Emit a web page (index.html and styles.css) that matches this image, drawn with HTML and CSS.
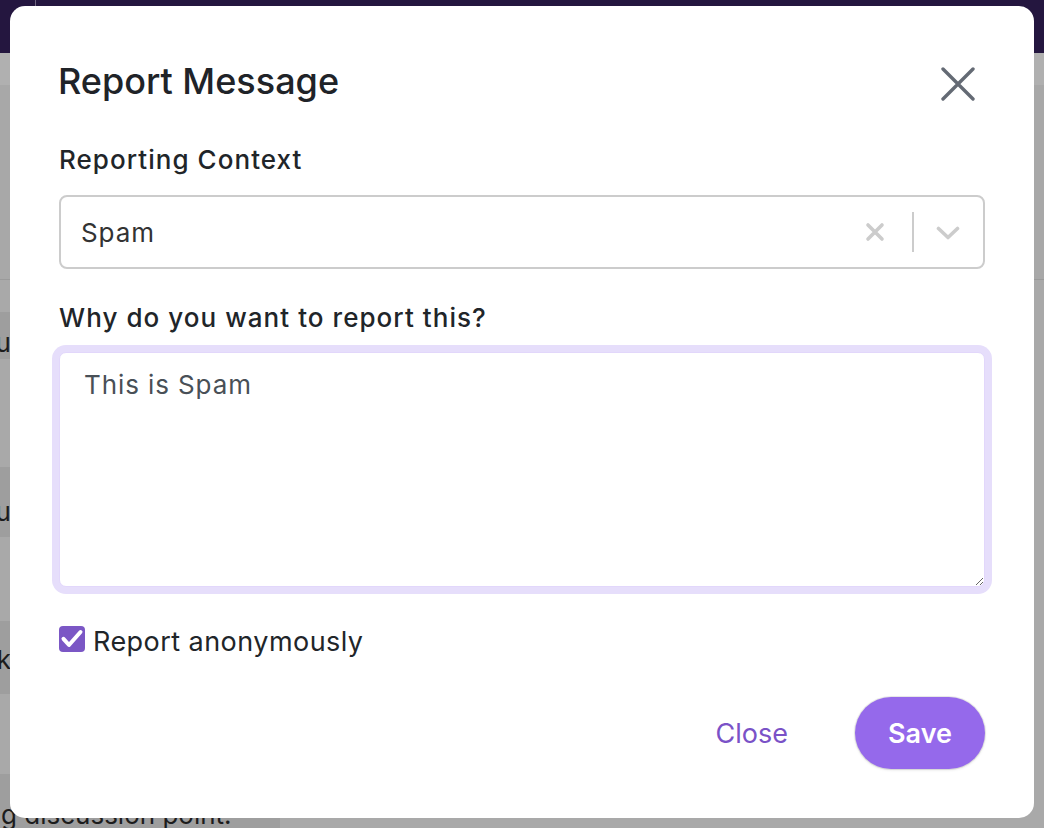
FILE: index.html
```html
<!DOCTYPE html>
<html lang="en">
<head>
<meta charset="utf-8">
<title>Report Message</title>
<link rel="stylesheet" href="styles.css">
</head>
<body>
<div class="page">
  <div class="topbar"><div class="topbar-divider"></div></div>
  <div class="subbar"></div>
  <div class="channel-head"></div>
  <div class="feed">
    <div class="msg msg-1"><div class="msg-clip"><span>Thank you</span></div></div>
    <div class="msg msg-2"><div class="msg-clip"><span>See you</span></div></div>
    <div class="msg msg-3"><div class="msg-clip"><span>Thanks, ok</span></div></div>
    <div class="msg msg-4"><span class="msg-text">g discussion point.</span></div>
  </div>
</div>

<div class="modal" role="dialog" aria-labelledby="modal-title">
  <div class="modal-header">
    <h2 class="modal-title" id="modal-title">Report Message</h2>
    <button class="icon-close" type="button" aria-label="Close">
      <svg width="34" height="34" viewBox="0 0 34 34"><path d="M2 2 L32 32 M32 2 L2 32" stroke="#646a74" stroke-width="3.4" stroke-linecap="round" fill="none"/></svg>
    </button>
  </div>

  <div class="field-label label-context">Reporting Context</div>
  <div class="select">
    <div class="select-value">Spam</div>
    <div class="select-indicators">
      <span class="select-clear">
        <svg width="20" height="20" viewBox="0 0 20 20"><path d="M3 3 L17 17 M17 3 L3 17" stroke="#cccccc" stroke-width="3.6" stroke-linecap="round" fill="none"/></svg>
      </span>
      <span class="select-sep"></span>
      <span class="select-chevron">
        <svg width="24" height="15" viewBox="0 0 24 15"><path d="M2.5 2.5 L12 11.5 L21.5 2.5" stroke="#cccccc" stroke-width="3.6" stroke-linecap="round" stroke-linejoin="round" fill="none"/></svg>
      </span>
    </div>
  </div>

  <label class="field-label label-why" for="reason">Why do you want to report this?</label>
  <textarea class="reason" id="reason">This is Spam</textarea>

  <label class="check-row">
    <span class="checkbox">
      <svg width="26" height="26" viewBox="0 0 26 26"><path d="M4.5 12.8 L10 19 L21.5 6" stroke="#ffffff" stroke-width="4" stroke-linecap="round" stroke-linejoin="round" fill="none"/></svg>
    </span>
    <span class="check-label">Report anonymously</span>
  </label>

  <div class="modal-footer">
    <button class="btn-link" type="button">Close</button>
    <button class="btn-save" type="button">Save</button>
  </div>
</div>
</body>
</html>
```

FILE: styles.css
```css
* { box-sizing: border-box; }

html, body {
  margin: 0;
  padding: 0;
  width: 1044px;
  height: 828px;
  overflow: hidden;
  background: #a9a9a9;
  font-family: Inter, "Noto Sans", "Liberation Sans", sans-serif;
}

/* ---------- dimmed page behind the dialog ---------- */
.page {
  display: flex;
  flex-direction: column;
  height: 828px;
  overflow: hidden;
}
.page > * { flex-shrink: 0; }
.topbar {
  height: 53px;
  background: #24163f;
  padding-left: 35px;
}
.topbar-divider {
  width: 1px;
  height: 53px;
  background: #6f6680;
}
.subbar {
  height: 32px;
  background: #b0b0b0;
}
.channel-head {
  height: 195px;
  background: #a8a8a8;
  border-bottom: 1px solid #9a9a9a;
}
.feed {
  display: flex;
  flex-direction: column;
}
.feed > * { flex-shrink: 0; }
.msg {
  width: 280px;
  background: #9e9e9e;
  display: flex;
  align-items: flex-start;
  font-size: 26px;
  line-height: 30px;
  color: #1c1c1c;
}
.msg-clip {
  width: 11px;
  display: flex;
  justify-content: flex-end;
  white-space: nowrap;
}
.msg-1 { margin-top: 32px; height: 47px; padding-top: 16px; }
.msg-2 { margin-top: 108px; height: 70px; padding-top: 30px; }
.msg-3 { margin-top: 84px; height: 73px; padding-top: 24px; }
.msg-4 { margin-top: 80px; height: 60px; padding: 26px 0 0 1px; }
.msg-4 .msg-text { white-space: nowrap; }

/* ---------- dialog ---------- */
.modal {
  position: fixed;
  top: 6px;
  left: 10px;
  width: 1024px;
  height: 812px;
  background: #ffffff;
  border-radius: 15px;
  padding: 53px 49px 49px 49px;
  display: flex;
  flex-direction: column;
  color: #212529;
}

.modal-header {
  display: flex;
  align-items: center;
  justify-content: space-between;
  height: 44px;
}
.modal-title {
  margin: 0 0 0 -1px;
  font-size: 36px;
  line-height: 44px;
  font-weight: 500;
  color: #202328;
}
.icon-close {
  border: 0;
  background: none;
  padding: 0;
  margin: 5px 10px 0 0;
  width: 34px;
  height: 34px;
  display: block;
}
.icon-close svg { display: block; }

.field-label {
  display: block;
  font-size: 26px;
  line-height: 32px;
  font-weight: 500;
  letter-spacing: 1.05px;
  color: #212529;
}
.label-context { margin-top: 41px; }
.label-why { margin-top: 33px; }

.select {
  margin-top: 19px;
  height: 74px;
  border: 2px solid #cccccc;
  border-radius: 8px;
  display: flex;
  align-items: center;
}
.select-value {
  flex: 1;
  padding-left: 20px;
  font-size: 26px;
  letter-spacing: 0.9px;
  color: #333333;
}
.select-indicators {
  display: flex;
  align-items: center;
  height: 100%;
}
.select-clear {
  display: flex;
  margin-right: 27px;
}
.select-sep {
  width: 2px;
  height: 40px;
  background: #cccccc;
}
.select-chevron {
  display: flex;
  margin-left: 22px;
  margin-right: 23px;
  margin-top: 2px;
}

.reason {
  margin-top: 18px;
  height: 235px;
  width: 100%;
  border: 1px solid #e2d7fb;
  border-radius: 7px;
  box-shadow: 0 0 0 7px #e6defb;
  outline: none;
  padding: 12px 24px;
  font-family: Inter, "Noto Sans", "Liberation Sans", sans-serif;
  font-size: 26px;
  line-height: 39px;
  letter-spacing: 0.9px;
  color: #495057;
  resize: vertical;
}

.check-row {
  margin-top: 34px;
  display: flex;
  align-items: center;
  gap: 8px;
  height: 36px;
}
.checkbox {
  width: 26px;
  height: 26px;
  border-radius: 4px;
  background: #7b57c5;
  display: flex;
}
.check-label {
  font-size: 27px;
  line-height: 36px;
  letter-spacing: 0.45px;
  margin-top: 5px;
  color: #212529;
}

.modal-footer {
  margin-top: 40px;
  display: flex;
  justify-content: flex-end;
  align-items: center;
  gap: 39px;
}
.btn-link {
  border: 0;
  background: none;
  padding: 0 28px;
  height: 72px;
  font-family: inherit;
  font-size: 27px;
  color: #7a52c7;
}
.btn-save {
  width: 130px;
  height: 72px;
  border: 0;
  border-radius: 36px;
  background: #9569eb;
  color: #ffffff;
  font-family: inherit;
  font-size: 27px;
  font-weight: 600;
  box-shadow: 0 0 0 1px rgba(0, 0, 0, 0.08), 0 1px 3px rgba(0, 0, 0, 0.12);
}
```
